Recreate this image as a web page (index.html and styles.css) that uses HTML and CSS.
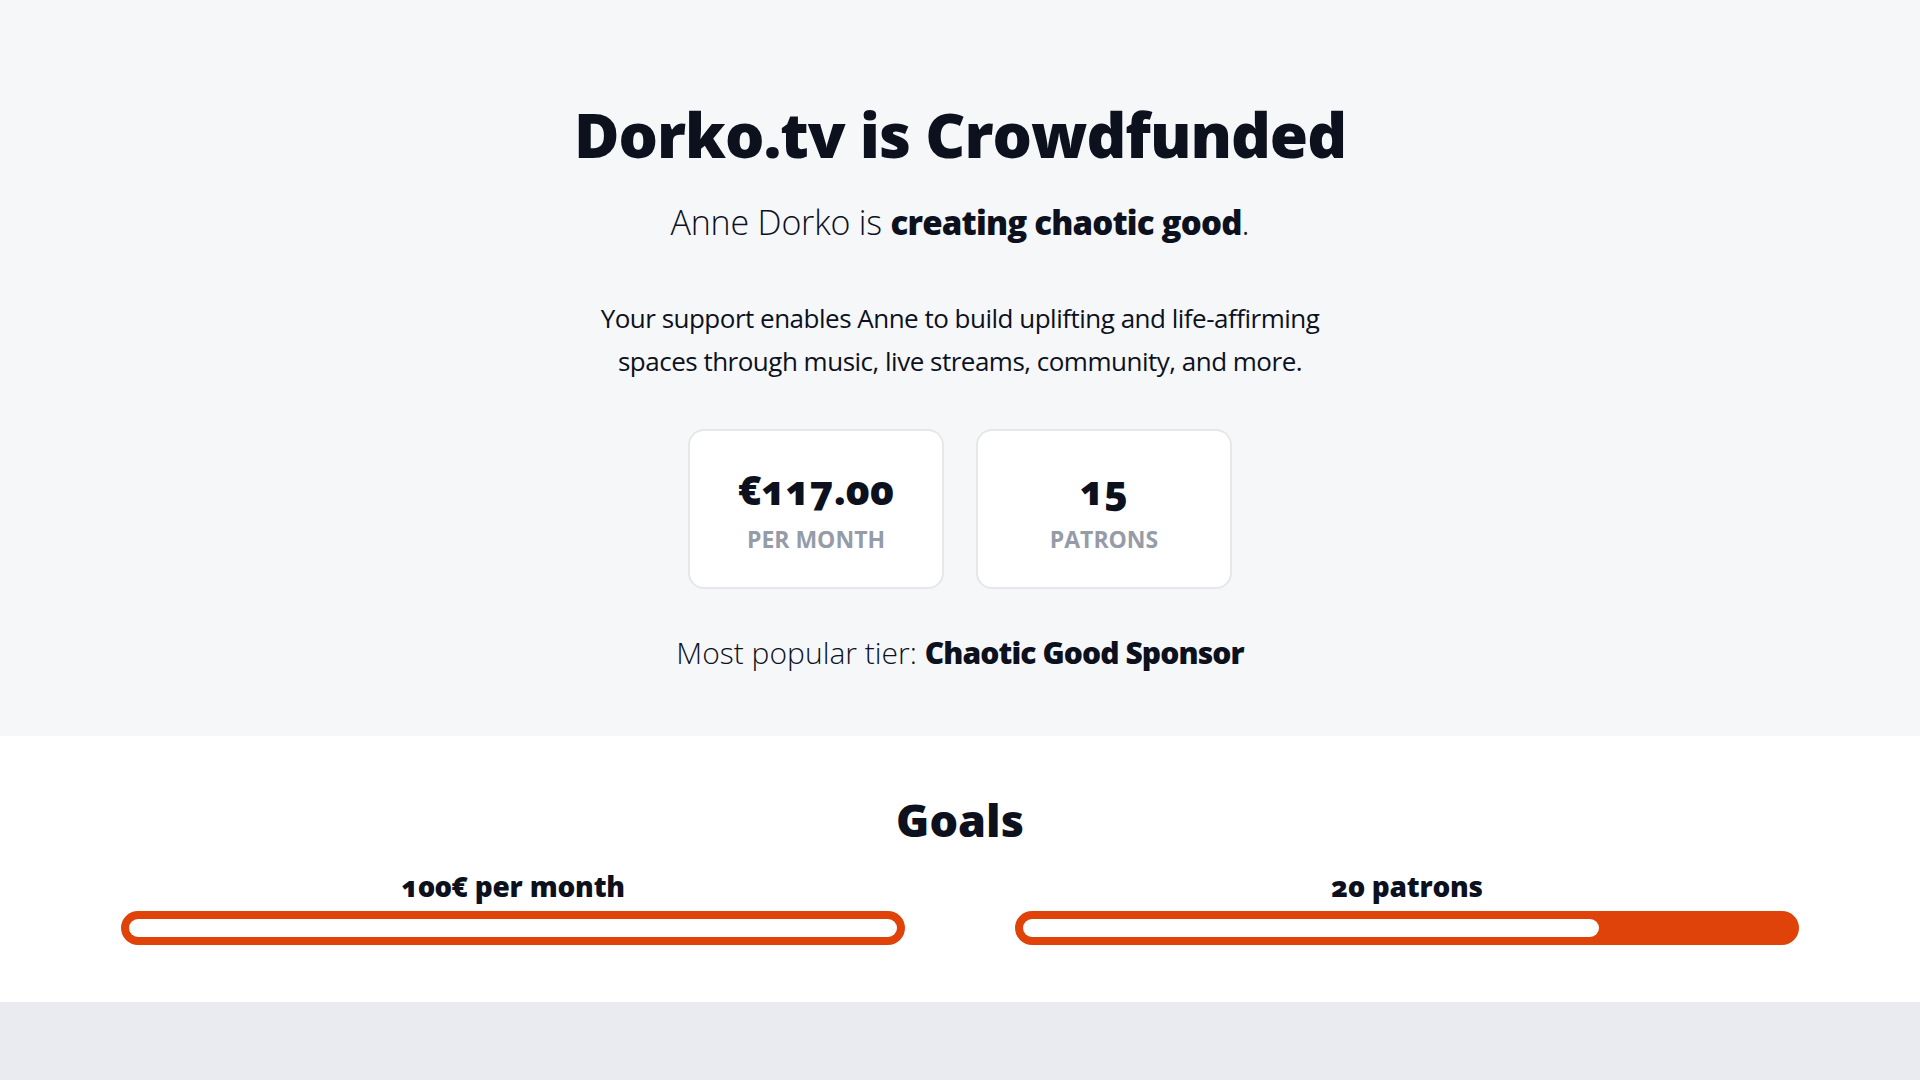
FILE: index.html
```html
<!DOCTYPE html>
<html lang="en">
<head>
<meta charset="utf-8">
<title>Dorko.tv is Crowdfunded</title>
<link rel="stylesheet" href="styles.css">
</head>
<body>
<main class="page">
  <section class="hero">
    <h1 class="hero-title">Dorko.tv is Crowdfunded</h1>
    <p class="hero-lead">Anne Dorko is <strong>creating chaotic good</strong>.</p>
    <p class="hero-desc">Your support enables Anne to build uplifting and life-affirming spaces through music, live streams, community, and more.</p>
    <div class="stats">
      <div class="stat-card">
        <div class="stat-value">€117.00</div>
        <div class="stat-label">Per month</div>
      </div>
      <div class="stat-card">
        <div class="stat-value">15</div>
        <div class="stat-label">Patrons</div>
      </div>
    </div>
    <p class="hero-popular">Most popular tier: <strong>Chaotic Good Sponsor</strong></p>
  </section>
  <section class="goals">
    <h2 class="goals-title">Goals</h2>
    <div class="goal-grid">
      <div class="goal">
        <h3 class="goal-name">100€ per month</h3>
        <div class="goal-track"><div class="goal-fill" style="width: 100%"></div></div>
      </div>
      <div class="goal">
        <h3 class="goal-name">20 patrons</h3>
        <div class="goal-track"><div class="goal-fill" style="width: 75%"></div></div>
      </div>
    </div>
  </section>
  <footer class="footer"></footer>
</main>
</body>
</html>
```

FILE: styles.css
```css
* { box-sizing: border-box; }
html, body { margin: 0; padding: 0; }
body {
  font-family: "Open Sans", "Noto Sans", sans-serif;
  color: #0c111d;
  background: #e9ebf0;
}
.page { display: flex; flex-direction: column; min-height: 100vh; }

.hero {
  background: #f6f7f9;
  display: flex;
  flex-direction: column;
  align-items: center;
  text-align: center;
  padding: 96px 24px 46px;
  height: 736px;
}
.hero-title {
  margin: 0;
  font-size: 62px;
  line-height: 76px;
  font-weight: 800;
  letter-spacing: -1px;
}
.hero-lead {
  margin: 28px 0 0;
  font-size: 34px;
  line-height: 44px;
  font-weight: 300;
  letter-spacing: -0.2px;
}
.hero-lead strong {
  font-size: 33px;
  font-weight: 800;
  letter-spacing: -0.8px;
}
.hero-desc {
  margin: 52px 0 0;
  max-width: 760px;
  font-size: 26px;
  line-height: 43px;
  font-weight: 400;
  letter-spacing: -0.5px;
}
.stats {
  display: flex;
  gap: 32px;
  margin-top: 46px;
}
.stat-card {
  width: 256px;
  height: 160px;
  background: #ffffff;
  border: 2px solid #e5e7eb;
  border-radius: 16px;
  display: flex;
  flex-direction: column;
  align-items: center;
  justify-content: center;
  gap: 11px;
}
.stat-value {
  font-size: 40px;
  line-height: 48px;
  font-weight: 800;
  font-variant-numeric: oldstyle-nums;
}
.stat-label {
  font-size: 23px;
  line-height: 28px;
  font-weight: 700;
  text-transform: uppercase;
  color: #959ca8;
}
.hero-popular {
  margin: 44px 0 0;
  font-size: 30px;
  line-height: 40px;
  font-weight: 300;
}
.hero-popular strong {
  font-weight: 800;
  letter-spacing: -0.9px;
}

.goals {
  background: #ffffff;
  padding: 58px 121px 56px;
  height: 266px;
}
.goals-title {
  margin: 0;
  text-align: center;
  font-size: 45px;
  line-height: 52px;
  font-weight: 800;
}
.goal-grid {
  display: grid;
  grid-template-columns: 1fr 1fr;
  gap: 110px;
  margin-top: 22px;
}
.goal { display: flex; flex-direction: column; align-items: stretch; }
.goal-name {
  margin: 0 0 7px;
  text-align: center;
  font-size: 28px;
  line-height: 36px;
  font-weight: 800;
  letter-spacing: -0.2px;
  font-variant-numeric: oldstyle-nums;
}
.goal-track {
  height: 34px;
  padding: 8px;
  background: #df4309;
  border-radius: 17px;
}
.goal-fill {
  height: 18px;
  background: #ffffff;
  border-radius: 9px;
}
.footer { flex: 1; background: #e9ebf0; }
```
